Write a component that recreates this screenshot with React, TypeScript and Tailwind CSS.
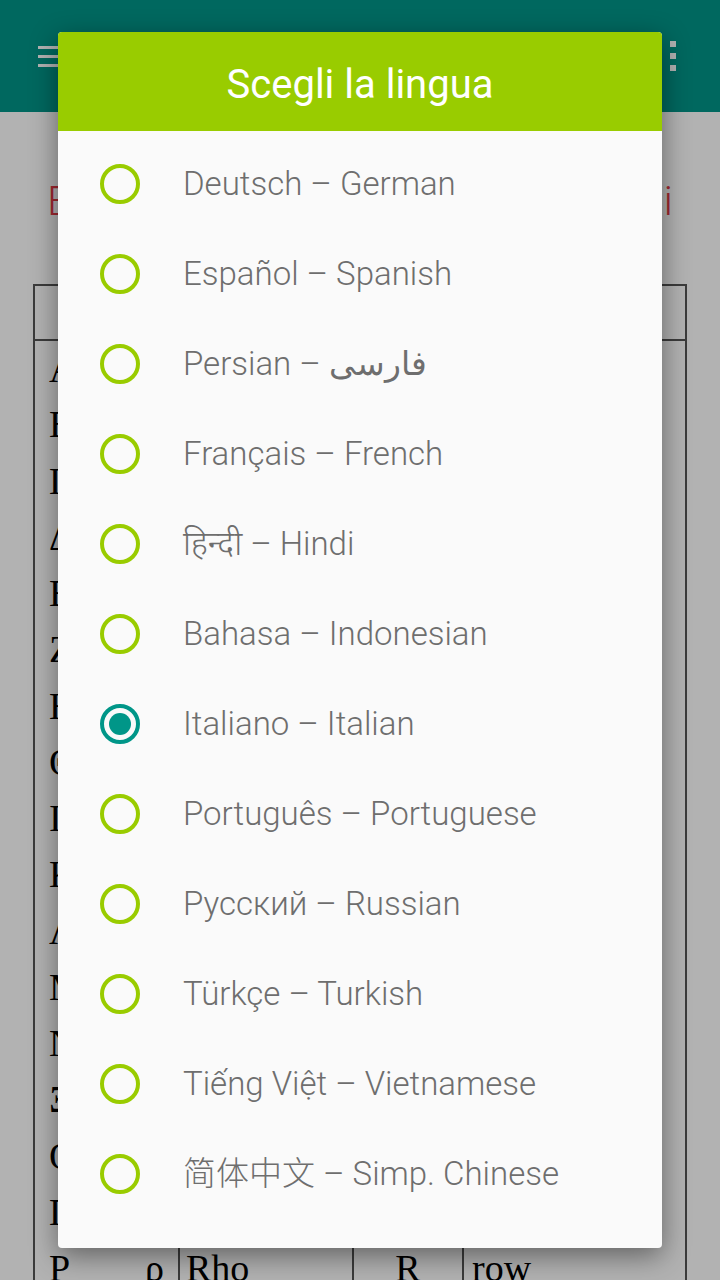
import React from 'react';

interface Lang {
  native: string;
  english: string;
  nativeFirst: boolean;
}

const LANGS: Lang[] = [
  { native: 'Deutsch', english: 'German', nativeFirst: true },
  { native: 'Español', english: 'Spanish', nativeFirst: true },
  { native: 'فارسی', english: 'Persian', nativeFirst: false },
  { native: 'Français', english: 'French', nativeFirst: true },
  { native: 'हिन्दी', english: 'Hindi', nativeFirst: true },
  { native: 'Bahasa', english: 'Indonesian', nativeFirst: true },
  { native: 'Italiano', english: 'Italian', nativeFirst: true },
  { native: 'Português', english: 'Portuguese', nativeFirst: true },
  { native: 'Русский', english: 'Russian', nativeFirst: true },
  { native: 'Türkçe', english: 'Turkish', nativeFirst: true },
  { native: 'Tiếng Việt', english: 'Vietnamese', nativeFirst: true },
  { native: '简体中文', english: 'Simp. Chinese', nativeFirst: true },
];

const GREEK: [string, string, string, string, string][] = [
  ['Α', 'α', 'Alpha', 'A', 'father'],
  ['Β', 'β', 'Beta', 'B', 'bed'],
  ['Γ', 'γ', 'Gamma', 'G', 'go'],
  ['Δ', 'δ', 'Delta', 'D', 'dog'],
  ['Ε', 'ε', 'Epsilon', 'E', 'pet'],
  ['Ζ', 'ζ', 'Zeta', 'Z', 'zoo'],
  ['Η', 'η', 'Eta', 'Ē', 'hey'],
  ['Θ', 'θ', 'Theta', 'Th', 'thin'],
  ['Ι', 'ι', 'Iota', 'I', 'ski'],
  ['Κ', 'κ', 'Kappa', 'K', 'kite'],
  ['Λ', 'λ', 'Lambda', 'L', 'lamp'],
  ['Μ', 'μ', 'Mu', 'M', 'man'],
  ['Ν', 'ν', 'Nu', 'N', 'net'],
  ['Ξ', 'ξ', 'Xi', 'X', 'box'],
  ['Ο', 'ο', 'Omicron', 'O', 'pot'],
  ['Π', 'π', 'Pi', 'P', 'pen'],
  ['Ρ', 'ρ', 'Rho', 'R', 'row'],
];

const SELECTED = 'Italiano';

function Radio({ checked }: { checked: boolean }) {
  if (checked) {
    return (
      <span className="w-10 h-10 rounded-full border-4 border-[#009688] flex items-center justify-center shrink-0">
        <span className="w-[22px] h-[22px] rounded-full bg-[#009688]" />
      </span>
    );
  }
  return <span className="w-10 h-10 rounded-full border-4 border-[#99cc00] shrink-0" />;
}

export default function App() {
  return (
    <div className="relative w-[720px] h-[1280px] overflow-hidden bg-white font-['Roboto','Noto_Sans',sans-serif]">
      {/* App bar */}
      <header className="h-[112px] bg-[#009688] flex items-center justify-between pl-[38px] pr-[44px]">
        <div className="flex flex-col gap-[6px] w-[20px]">
          <span className="h-[3px] bg-white" />
          <span className="h-[3px] bg-white" />
          <span className="h-[3px] bg-white" />
        </div>
        <div className="flex flex-col gap-[6px]">
          <span className="w-[6px] h-[6px] bg-white" />
          <span className="w-[6px] h-[6px] bg-white" />
          <span className="w-[6px] h-[6px] bg-white" />
        </div>
      </header>

      {/* Page content */}
      <main className="px-[33px]">
        <h2 className="mt-[66px] text-center text-[40px] font-light text-[#e53945] leading-[48px] whitespace-nowrap -mx-[20px]">
          Elenco delle lettere greche e loro usi
        </h2>
        <table className="mt-[58px] w-[654px] border-collapse border-2 border-[#555] font-['Liberation_Serif',serif] text-[38px] text-black">
          <thead>
            <tr className="h-[55px]">
              <th className="border-2 border-[#555] w-[145px]" />
              <th className="border-2 border-[#555] w-[174px]" />
              <th className="border-2 border-[#555] w-[110px]" />
              <th className="border-2 border-[#555]" />
            </tr>
          </thead>
          <tbody>
            {GREEK.map(([up, low, name, tr, ex]) => (
              <tr key={name} className="h-[56.25px] leading-none">
                <td className="border-x-2 border-[#555] px-[14px]">
                  <div className="flex justify-between">
                    <span>{up}</span>
                    <span>{low}</span>
                  </div>
                </td>
                <td className="border-x-2 border-[#555] px-[6px]">{name}</td>
                <td className="border-x-2 border-[#555] text-center">{tr}</td>
                <td className="border-x-2 border-[#555] px-[8px]">{ex}</td>
              </tr>
            ))}
          </tbody>
        </table>
      </main>

      {/* Scrim */}
      <div className="absolute inset-0 bg-black/30" />

      {/* Dialog */}
      <div className="absolute left-[58px] top-[32px] w-[604px] rounded-[4px] overflow-hidden bg-[#fafafa] shadow-[0_8px_28px_rgba(0,0,0,0.45)]">
        <div className="h-[99px] bg-[#99cc00] flex items-center justify-center pt-[6px]">
          <h1 className="text-white text-[40px] leading-none">Scegli la lingua</h1>
        </div>
        <ul className="pt-[8px] pb-[29px]">
          {LANGS.map((l) => (
            <li key={l.english} className="h-[90px] flex items-center pl-[42px] gap-[43px]">
              <Radio checked={l.native === SELECTED} />
              <span className="text-[33px] font-light text-[#6e6e6e] whitespace-nowrap font-['Roboto','Noto_Sans','Noto_Sans_CJK_SC',sans-serif]">
                {l.nativeFirst ? `${l.native} – ${l.english}` : `${l.english} – ${l.native}`}
              </span>
            </li>
          ))}
        </ul>
      </div>
    </div>
  );
}
